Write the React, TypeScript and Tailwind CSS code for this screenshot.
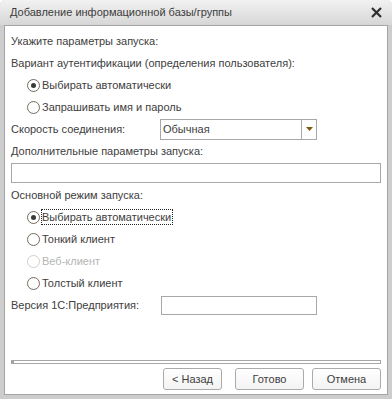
import React from "react";

const font = { fontFamily: '"Liberation Sans", Arial, sans-serif' };

function Radio({ checked, disabled }: { checked?: boolean; disabled?: boolean }) {
  return (
    <span
      className={`w-[13px] h-[13px] rounded-full border bg-white flex items-center justify-center shrink-0 ${
        disabled ? "border-[#d3cec4]" : "border-[#736b5c]"
      }`}
    >
      {checked && <span className="w-[5px] h-[5px] rounded-full bg-[#3a3a3a]" />}
    </span>
  );
}

function RadioRow({
  label,
  checked,
  disabled,
  focused,
}: {
  label: string;
  checked?: boolean;
  disabled?: boolean;
  focused?: boolean;
}) {
  return (
    <div className="h-[22px] flex items-center pl-[16px] gap-[2px]">
      <Radio checked={checked} disabled={disabled} />
      <span
        className={`leading-[14px] ${disabled ? "text-[#b4b4b4]" : "text-[#404040]"} ${
          focused ? "outline outline-1 outline-dotted outline-[#222] pr-[1px]" : ""
        }`}
      >
        {label}
      </span>
    </div>
  );
}

export default function App() {
  return (
    <div
      className="w-[392px] h-[399px] bg-[#cdcdcd] rounded-t-[5px] flex flex-col text-[11px] text-[#404040]"
      style={font}
    >
      {/* Title bar */}
      <div className="h-[25px] shrink-0 rounded-t-[5px] bg-gradient-to-b from-[#f2f2f2] to-[#d6d6d6] flex items-center pl-[10px] pr-[10px]">
        <span className="text-[11px] text-[#3c3c3c]">Добавление информационной базы/группы</span>
        <svg className="ml-auto" width="11" height="11" viewBox="0 0 11 11">
          <path d="M1 1 L10 10 M10 1 L1 10" stroke="#2e2e2e" strokeWidth="2.2" />
        </svg>
      </div>

      {/* Content */}
      <div className="mx-[4px] mb-[4px] flex-1 bg-white border border-[#a4a4a4] flex flex-col pt-[4px] px-[6px]">
        <div className="h-[22px] flex items-center">Укажите параметры запуска:</div>
        <div className="h-[22px] flex items-center">Вариант аутентификации (определения пользователя):</div>
        <RadioRow label="Выбирать автоматически" checked />
        <RadioRow label="Запрашивать имя и пароль" />

        <div className="h-[22px] flex items-center">
          <span className="w-[149px] shrink-0">Скорость соединения:</span>
          <div className="w-[157px] h-[21px] border border-[#a8a8a8] flex">
            <span className="flex-1 pl-[2px] leading-[19px]">Обычная</span>
            <span className="w-[15px] border-l border-[#a8a8a8] flex items-center justify-center">
              <svg width="7" height="4" viewBox="0 0 7 4">
                <path d="M0 0 H7 L3.5 4 Z" fill="#7a5c10" />
              </svg>
            </span>
          </div>
        </div>

        <div className="h-[22px] flex items-center">Дополнительные параметры запуска:</div>
        <div className="h-[22px] flex items-center">
          <div className="w-full h-[20px] border border-[#a8a8a8]" />
        </div>

        <div className="h-[22px] flex items-center">Основной режим запуска:</div>
        <RadioRow label="Выбирать автоматически" checked focused />
        <RadioRow label="Тонкий клиент" />
        <RadioRow label="Веб-клиент" disabled />
        <RadioRow label="Толстый клиент" />

        <div className="h-[22px] flex items-center">
          <span className="w-[150px] shrink-0">Версия 1С:Предприятия:</span>
          <div className="w-[156px] h-[19px] border border-[#a8a8a8]" />
        </div>

        <div className="flex-1" />

        {/* Separator */}
        <div className="h-[4px] border border-[#a6a6a6] bg-white flex mb-[4px]">
          <span className="w-[2px] h-full bg-[#a0a0a0]" />
        </div>

        {/* Buttons */}
        <div className="flex justify-end items-center mb-[4px]">
          <button className="w-[59px] h-[22px] border border-[#ababab] rounded-[3px] bg-gradient-to-b from-white to-[#f3f3f3] text-[#404040]">
            &lt; Назад
          </button>
          <button className="ml-[13px] w-[69px] h-[22px] border border-[#ababab] rounded-[3px] bg-gradient-to-b from-white to-[#f3f3f3] text-[#404040]">
            Готово
          </button>
          <button className="ml-[8px] w-[69px] h-[22px] border border-[#ababab] rounded-[3px] bg-gradient-to-b from-white to-[#f3f3f3] text-[#404040]">
            Отмена
          </button>
        </div>
      </div>
    </div>
  );
}
